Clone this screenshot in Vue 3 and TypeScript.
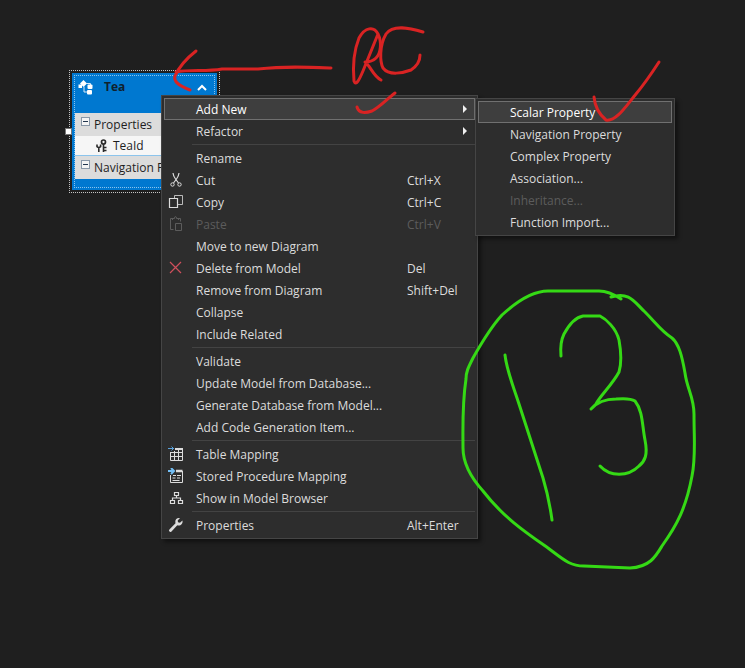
<script setup lang="ts">
interface MenuItem {
  label: string
  keys?: string
  icon?: string
  disabled?: boolean
  active?: boolean
  children?: MenuItem[]
  more?: boolean
}

const groups: MenuItem[][] = [
  [
    {
      label: 'Add New',
      active: true,
      more: true,
      children: [
        { label: 'Scalar Property', active: true },
        { label: 'Navigation Property' },
        { label: 'Complex Property' },
        { label: 'Association...' },
        { label: 'Inheritance...', disabled: true },
        { label: 'Function Import...' },
      ],
    },
    { label: 'Refactor', more: true },
  ],
  [
    { label: 'Rename' },
    { label: 'Cut', keys: 'Ctrl+X', icon: 'cut' },
    { label: 'Copy', keys: 'Ctrl+C', icon: 'copy' },
    { label: 'Paste', keys: 'Ctrl+V', icon: 'paste', disabled: true },
    { label: 'Move to new Diagram' },
    { label: 'Delete from Model', keys: 'Del', icon: 'delete' },
    { label: 'Remove from Diagram', keys: 'Shift+Del' },
    { label: 'Collapse' },
    { label: 'Include Related' },
  ],
  [
    { label: 'Validate' },
    { label: 'Update Model from Database...' },
    { label: 'Generate Database from Model...' },
    { label: 'Add Code Generation Item...' },
  ],
  [
    { label: 'Table Mapping', icon: 'table' },
    { label: 'Stored Procedure Mapping', icon: 'procedure' },
    { label: 'Show in Model Browser', icon: 'browser' },
  ],
  [{ label: 'Properties', keys: 'Alt+Enter', icon: 'wrench' }],
]
</script>

<template>
  <main class="canvas">
    <section class="entity">
      <span class="handle"></span>
      <div class="frame">
        <header class="entity-head">
          <svg class="entity-icon" width="16" height="16" viewBox="0 0 16 16" fill="#fff">
            <path d="M5.500 0 9 3.500 5.500 7 2 3.500z" />
            <path d="M.5 4.500h3.500v3.500H.5z" />
            <path d="M8 3.500h4.500V6M6 6.500v5.500h4" fill="none" stroke="#d5e9f8" />
            <rect x="9.500" y="4.500" width="5" height="4.500" rx="1" />
            <rect x="9" y="10" width="5" height="4.500" rx="1" />
          </svg>
          <h1>Tea</h1>
          <button class="fold" aria-label="Collapse entity">
            <svg width="10" height="8" viewBox="0 0 10 8" fill="none" stroke="#fff" stroke-width="2">
              <path d="M1 6 5 2l4 4" />
            </svg>
          </button>
        </header>
        <div class="compartment"><span class="minus"></span>Properties</div>
        <div class="field">
          <svg width="12" height="14" viewBox="0 0 12 14" fill="none" stroke="#2b2b2b">
            <circle cx="7.5" cy="3" r="2" stroke-width="1.7" />
            <path d="M7.5 5v8M8 8.500h2.500M8 11.500h2.500" stroke-width="1.600" />
            <path d="M1 5.500v2.200q1.800 1.600 3.600 0V5.500M2.800 8.500V13" stroke-width="1.600" />
          </svg>
          TeaId
        </div>
        <div class="compartment"><span class="minus"></span>Navigation Properties</div>
        <div class="entity-foot"></div>
      </div>
    </section>

    <nav class="menu main-menu">
      <ul v-for="(group, g) in groups" :key="g">
        <li v-for="item in group" :key="item.label">
          <button class="item" :class="{ active: item.active }" :disabled="item.disabled">
            <span class="icon">
              <svg v-if="item.icon" width="16" height="16" viewBox="0 0 16 16" fill="none" stroke="currentColor">
                <g v-if="item.icon === 'cut'">
                  <path d="M5 1q.3 3 2.500 6l3 4M11 1q-.3 3-2.500 6l-3 4" stroke-width="1.200" />
                  <circle cx="4.500" cy="12.500" r="1.700" />
                  <circle cx="11.500" cy="12.500" r="1.700" />
                </g>
                <g v-else-if="item.icon === 'copy'">
                  <path d="M6.500 4.500v-3h8v9h-5" opacity=".8" />
                  <path d="M1.500 4.500h8v9h-8z" stroke-width="1.200" />
                </g>
                <g v-else-if="item.icon === 'paste'">
                  <path d="M5.500 13.500h-3v-11h2.500M10 2.500h2.500v3M4.500 4V2.500h2q0-2 1-2t1 2h2V4" />
                  <path d="M7.500 7.500h6v7h-6z" />
                </g>
                <path v-else-if="item.icon === 'delete'" d="m2 2 11 11M13 2 2 13" stroke="#cf4f5c" stroke-width="1.200" />
                <g v-else-if="item.icon === 'table'">
                  <path d="M7 3h8" stroke-width="2" />
                  <path d="M2.500 6v8.500h12V3M2.500 6.500h12M2.500 10.500h12M6.500 5v9.500M10.500 4v10.500" />
                  <path d="M0 2.500h6M3.500.5l2 2-2 2" stroke="#5ba3dc" />
                </g>
                <g v-else-if="item.icon === 'procedure'">
                  <path d="M8 3h6.500" stroke-width="2.500" />
                  <path d="M2.500 7v7.500h12V3" />
                  <path d="M5 7.500h3M9 7.500h4M4.500 10h3M9 10h3M4.500 12.500h7" />
                  <path d="M0 3h6M3 0l3 3-3 3" stroke="#73bff5" stroke-width="2" />
                </g>
                <path
                  v-else-if="item.icon === 'browser'"
                  d="M6.500 2.500h4v3h-4zM2.500 10.500h4v3h-4zM10.500 10.500h4v3h-4zM8.500 5.500v2.500M4.500 10.500V8h8v2.500"
                  stroke-width="1.200"
                />
                <path
                  v-else
                  d="M14.400 3.400 12 5.700 10 5.300 9.700 3.500 12 1.100C9.500.4 7.200 2 7.300 5L7.500 6.300 1.400 12.400A1.400 1.400 0 1 0 3.500 14.400L9.300 8.300C12.500 9.200 15.300 6.400 14.400 3.400z"
                  fill="currentColor"
                  stroke="none"
                />
              </svg>
            </span>
            <span class="label">{{ item.label }}</span>
            <span v-if="item.keys" class="keys">{{ item.keys }}</span>
            <span v-if="item.more" class="more"></span>
          </button>
          <ul v-if="item.children" class="menu submenu">
            <li v-for="child in item.children" :key="child.label">
              <button class="item" :class="{ active: child.active }" :disabled="child.disabled">
                <span class="icon"></span>
                <span class="label">{{ child.label }}</span>
              </button>
            </li>
          </ul>
        </li>
      </ul>
    </nav>

    <svg class="ink" width="745" height="600" viewBox="0 0 745 600" aria-hidden="true">
      <g class="red">
        <path d="M196 51C187 58 179 67 175 76C173 82 180 86 190 90" />
        <path d="M176 72C190 69 206 72 222 69L258 69C285 66 307 67 331 68" />
        <path d="M378 34C374 26 365 27 359 38C353 53 353 70 354 81C356 87 360 78 363 71L378 34C382 42 381 53 376 58C373 61 369 62 365 62C370 65 373 76 381 80" />
        <path d="M423 32C410 28 393 24 386 34C379 46 380 62 383 68C389 76 403 73 411 70C417 66 420 62 420 55" />
        <path d="M357 107C359 114 366 113 372 111C380 107 387 99 395 93" />
        <path d="M594 97C595 108 600 115 606 120C616 122 626 106 636 94Q646 82 659 62" />
      </g>
      <g class="green">
        <path d="M621 299C612 293 604 291 599 291H548C532 291 515 303 502 315C491 327 482 342 473 358C468 368 466 372 466 379C462 405 463 430 463 448C463 465 474 481 483 491C503 517 525 532 548 548C564 560 570 566 584 566L630 568C650 567 656 556 662 546C677 525 686 508 692 476C696 457 694 440 694 414C694 397 687 389 685 373C682 356 679 344 672 338C661 331 656 323 645 312C635 303 630 291 611 297" />
        <path d="M505 355C507 372 514 388 519 404L543 478C549 498 550 506 552 520" />
        <path d="M561 356C560 345 562 338 564 334C570 323 577 317 583 316H600C606 319 616 328 619 340C621 351 622 362 619 372C612 385 600 396 596 404L591 409C599 400 608 399 616 399C627 398 632 399 635 401C643 411 642 425 645 440C648 455 645 461 639 466C628 477 610 477 600 466" />
      </g>
    </svg>
  </main>
</template>

<style>
body {
  margin: 0;
  background: #1f1f1f;
}
</style>

<style scoped>
* {
  box-sizing: border-box;
}
.canvas {
  position: relative;
  min-height: 100vh;
  overflow: hidden;
  background: #1f1f1f;
  font: 12px/18px "Open Sans", "Noto Sans", sans-serif;
  color: #dcdcdc;
}
ul {
  list-style: none;
  margin: 0;
  padding: 0;
}
button {
  font: inherit;
  color: inherit;
  background: none;
  border: 0;
  margin: 0;
  padding: 0;
}
.entity {
  position: absolute;
  left: 69px;
  top: 70px;
  width: 151px;
  padding: 2px;
  border: 1px dotted #c4c4c4;
  color: #1e1e1e;
}
.handle {
  position: absolute;
  left: -5px;
  top: 57px;
  width: 7px;
  height: 7px;
  background: #fff;
  border: 1px solid #777;
}
.frame {
  border: 2px solid #0078d0;
  background: #0078d0;
  outline: 1px dotted #8cc4ec;
  outline-offset: -3px;
  padding: 1px;
}
.entity-head {
  display: flex;
  align-items: flex-start;
  height: 37px;
  padding: 2px 7px 0 3px;
}
.entity-icon {
  margin-top: 2px;
}
h1 {
  flex: 1;
  margin: 0 0 0 10px;
  font-size: 12px;
  color: #10202c;
}
.fold {
  display: flex;
  padding-top: 6px;
}
.compartment {
  display: flex;
  height: 23px;
  padding-left: 6px;
  line-height: 24px;
  background: #dcdcdc;
  overflow: hidden;
  white-space: nowrap;
}
.minus {
  flex: none;
  width: 9px;
  height: 9px;
  margin: 4px 4px 0 0;
  border: 1px solid #8a98a8;
  background: linear-gradient(#23364e, #23364e) center / 5px 1px no-repeat #f4f4f4;
}
.field {
  display: flex;
  align-items: center;
  gap: 5px;
  height: 20px;
  padding-left: 21px;
  background: #f6f6f6;
  border-bottom: 1px solid #8cc4ec;
}
.entity-foot {
  height: 8px;
}
.menu {
  padding: 2px;
  background: #2d2d2d;
  border: 1px solid #454545;
  box-shadow: 3px 3px 4px rgba(0, 0, 0, 0.45);
}
.main-menu {
  position: absolute;
  left: 161px;
  top: 95px;
  width: 317px;
}
.main-menu > ul + ul::before {
  content: "";
  display: block;
  height: 1px;
  margin: 2px 0 2px 28px;
  background: #434343;
}
li {
  position: relative;
}
.item {
  display: flex;
  align-items: center;
  width: 100%;
  height: 22px;
  border: 1px solid transparent;
  text-align: left;
  white-space: nowrap;
}
.item.active {
  background: #3e3e3e;
  border-color: #707070;
  color: #fff;
}
.item:disabled {
  color: #5c5c5c;
}
.icon {
  display: flex;
  flex: none;
  width: 31px;
  padding-left: 3px;
}
.label,
.keys {
  padding-top: 2px;
}
.label {
  flex: 1;
}
.keys {
  width: 67px;
}
.more {
  margin-right: 7px;
  border: 4px solid transparent;
  border-left-color: #f0f0f0;
  border-right-width: 0;
}
.submenu {
  position: absolute;
  left: 100%;
  top: 0;
  width: 200px;
  z-index: 1;
}
.ink {
  position: absolute;
  left: 0;
  top: 0;
  z-index: 2;
  pointer-events: none;
  fill: none;
  stroke-width: 3;
  stroke-linecap: round;
  stroke-linejoin: round;
}
.red {
  stroke: #d92323;
}
.green {
  stroke: #35d915;
}
</style>
